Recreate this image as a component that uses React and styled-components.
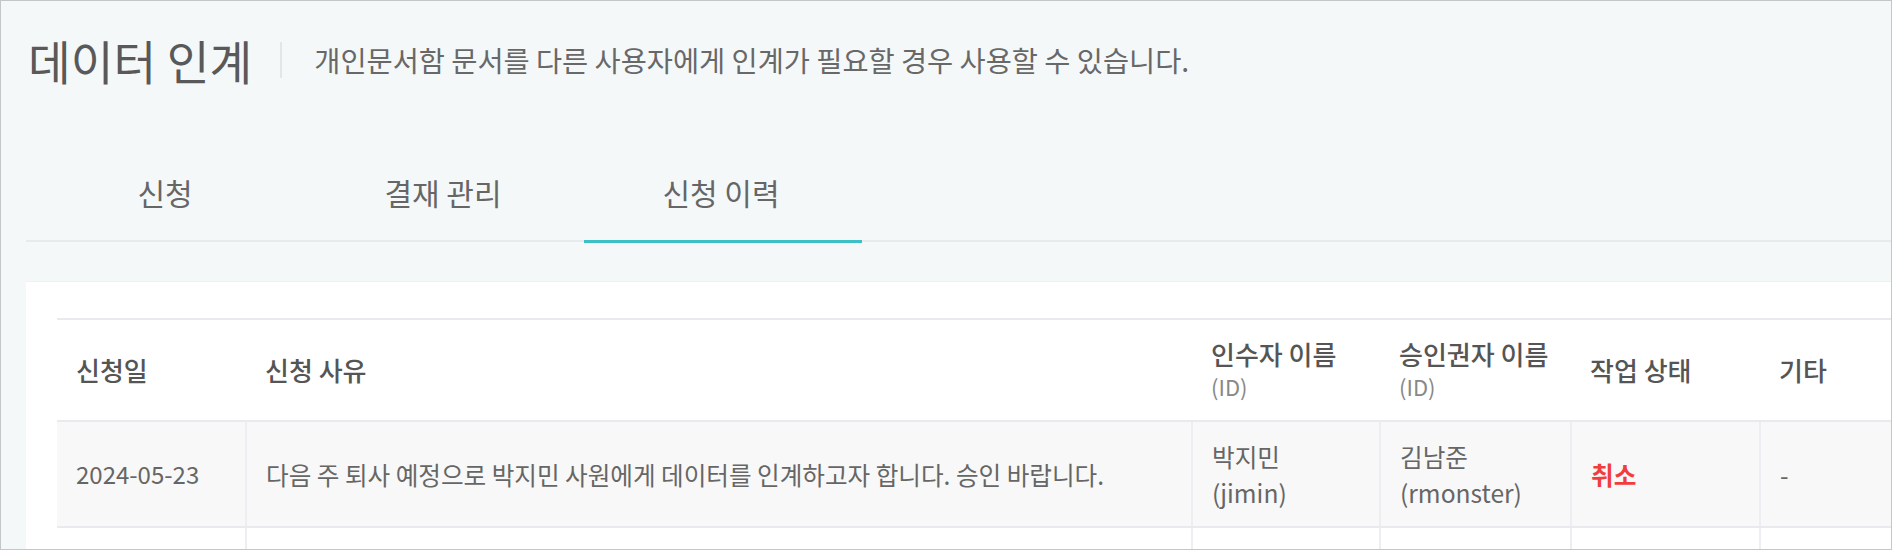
import styled, { createGlobalStyle } from 'styled-components';

const GlobalStyle = createGlobalStyle`
  html, body {
    margin: 0;
    padding: 0;
    background: #ffffff;
  }
  body {
    font-family: "Noto Sans CJK KR", "Noto Sans", sans-serif;
  }
`;

const tabs = ['신청', '결재 관리', '신청 이력'];

const columns = [
  { key: 'date', label: '신청일', width: 189 },
  { key: 'reason', label: '신청 사유', width: 946 },
  { key: 'receiver', label: '인수자 이름', sub: '(ID)', width: 188 },
  { key: 'approver', label: '승인권자 이름', sub: '(ID)', width: 191 },
  { key: 'status', label: '작업 상태', width: 189 },
  { key: 'etc', label: '기타', width: 190 },
];

const rows = [
  {
    id: 1,
    date: '2024-05-23',
    reason: '다음 주 퇴사 예정으로 박지민 사원에게 데이터를 인계하고자 합니다. 승인 바랍니다.',
    receiver: ['박지민', '(jimin)'],
    approver: ['김남준', '(rmonster)'],
    status: '취소',
    etc: '-',
  },
  { id: 2, empty: true },
];

const App = () => {
  return (
    <>
      <GlobalStyle />
      <Frame>
        <Header>
          <Title>데이터 인계</Title>
          <Divider />
          <Description>개인문서함 문서를 다른 사용자에게 인계가 필요할 경우 사용할 수 있습니다.</Description>
        </Header>

        <TabList>
          {tabs.map((tab, i) => (
            <Tab key={tab} $active={i === 2}>{tab}</Tab>
          ))}
        </TabList>

        <Card>
          <Table>
            <colgroup>
              {columns.map((col) => (
                <col key={col.key} style={{ width: col.width }} />
              ))}
            </colgroup>
            <thead>
              <tr>
                {columns.map((col) => (
                  <Th key={col.key}>
                    {col.label}
                    {col.sub && <SubLabel>{col.sub}</SubLabel>}
                  </Th>
                ))}
              </tr>
            </thead>
            <tbody>
              {rows.map((row) =>
                row.empty ? (
                  <Tr key={row.id}>
                    {columns.map((col) => (
                      <Td key={col.key} />
                    ))}
                  </Tr>
                ) : (
                  <Tr key={row.id} $striped>
                    <Td $narrow>{row.date}</Td>
                    <Td>{row.reason}</Td>
                    <Td>
                      {row.receiver[0]}
                      <br />
                      {row.receiver[1]}
                    </Td>
                    <Td>
                      {row.approver[0]}
                      <br />
                      {row.approver[1]}
                    </Td>
                    <Td>
                      <Status>{row.status}</Status>
                    </Td>
                    <Td>{row.etc}</Td>
                  </Tr>
                )
              )}
            </tbody>
          </Table>
        </Card>
      </Frame>
    </>
  );
};

const Frame = styled.div`
  width: 1892px;
  height: 550px;
  box-sizing: border-box;
  border: 1px solid #c4c6ca;
  background: #f5f8f9;
  overflow: hidden;
  padding-left: 25px;
`;

const Header = styled.div`
  display: flex;
  align-items: center;
  height: 118px;
`;

const Title = styled.h1`
  margin: 0;
  font-size: 46.5px;
  font-weight: 400;
  color: #595959;
  line-height: 1;
  padding-left: 2px;
`;

const Divider = styled.span`
  width: 2px;
  height: 36px;
  background: #e3e5e8;
  margin: 0 32px 0 28px;
`;

const Description = styled.p`
  margin: 0;
  font-size: 28.4px;
  color: #686868;
  line-height: 1;
`;

const TabList = styled.div`
  display: flex;
  margin-top: 25px;
  border-bottom: 2px solid #e8ebed;
`;

const Tab = styled.div`
  position: relative;
  width: 278px;
  height: 96px;
  display: flex;
  align-items: center;
  justify-content: center;
  font-size: 30px;
  color: #666;

  &::after {
    content: '';
    position: absolute;
    left: 2px;
    right: -2px;
    bottom: -3px;
    height: 3px;
    background: ${({ $active }) => ($active ? '#3cbfc5' : 'transparent')};
  }
`;

const Card = styled.div`
  margin-top: 39px;
  background: #ffffff;
  border-top: 1px solid #eef0f2;
  padding: 36px 31px 0;
  width: 2000px;
`;

const Table = styled.table`
  table-layout: fixed;
  border-collapse: collapse;
  width: 1893px;
  border-top: 2px solid #e8eaed;
`;

const Th = styled.th`
  height: 100px;
  padding: 0 19px;
  text-align: left;
  vertical-align: middle;
  font-size: 26px;
  font-weight: 500;
  color: #555;
  line-height: 32px;
  border-bottom: 2px solid #e8eaed;
`;

const SubLabel = styled.span`
  display: block;
  font-size: 22px;
  font-weight: 400;
  color: #888;
`;

const Tr = styled.tr`
  background: ${({ $striped }) => ($striped ? '#f8f8f8' : '#ffffff')};
`;

const Td = styled.td`
  height: 104px;
  padding: 0 19px;
  vertical-align: middle;
  font-size: ${({ $narrow }) => ($narrow ? '24px' : '24.6px')};
  color: #666;
  line-height: 36px;
  border-bottom: 2px solid #e8eaed;
  border-left: 2px solid #eceef1;

  &:first-child {
    border-left: none;
  }
`;

const Status = styled.span`
  color: #f23d3d;
  font-weight: 700;
`;

export default App;
